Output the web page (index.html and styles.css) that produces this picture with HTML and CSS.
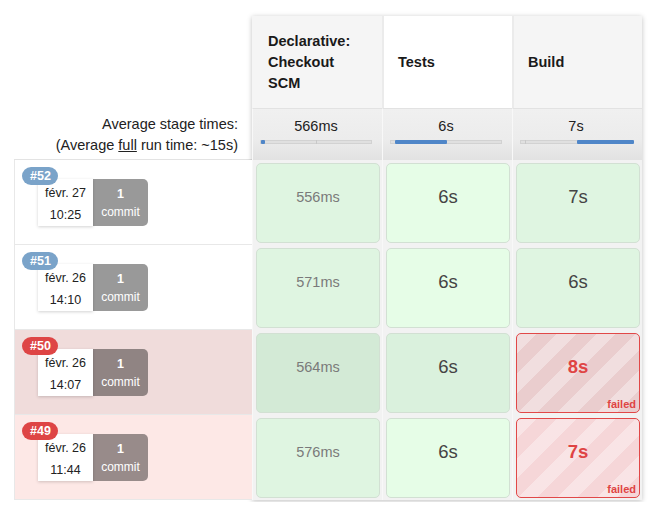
FILE: index.html
```html
<!DOCTYPE html>
<html>
<head>
<meta charset="utf-8">
<link rel="stylesheet" href="styles.css">
</head>
<body>
<div class="stage-view">
  <div class="runs">
    <div class="runs-head"></div>
    <div class="avg-label">
      <div>Average stage times:</div>
      <div>(Average <u>full</u> run time: ~15s)</div>
    </div>
    <div class="run">
      <span class="badge blue">#52</span>
      <div class="run-box">
        <div class="date"><span>févr. 27</span><span>10:25</span></div>
        <div class="commits"><b>1</b><span>commit</span></div>
      </div>
    </div>
    <div class="run">
      <span class="badge blue">#51</span>
      <div class="run-box">
        <div class="date"><span>févr. 26</span><span>14:10</span></div>
        <div class="commits"><b>1</b><span>commit</span></div>
      </div>
    </div>
    <div class="run run-failed run-hover">
      <span class="badge red">#50</span>
      <div class="run-box">
        <div class="date"><span>févr. 26</span><span>14:07</span></div>
        <div class="commits"><b>1</b><span>commit</span></div>
      </div>
    </div>
    <div class="run run-failed">
      <span class="badge red">#49</span>
      <div class="run-box">
        <div class="date"><span>févr. 26</span><span>11:44</span></div>
        <div class="commits"><b>1</b><span>commit</span></div>
      </div>
    </div>
  </div>

  <div class="stages">
    <div class="head head-wrap">Declarative: Checkout SCM</div>
    <div class="head head-hl">Tests</div>
    <div class="head">Build</div>

    <div class="avg"><div class="avg-time">566ms</div><div class="bar"><div class="fill" style="left:0;width:4px"></div><div class="tick" style="left:55px"></div></div></div>
    <div class="avg"><div class="avg-time">6s</div><div class="bar"><div class="fill" style="left:4px;width:52px"></div></div></div>
    <div class="avg"><div class="avg-time">7s</div><div class="bar"><div class="fill" style="left:56px;width:57px"></div><div class="tick" style="left:4px"></div></div></div>

    <div class="cell"><div class="box ok"><span class="ms">556ms</span></div></div>
    <div class="cell"><div class="box ok hl"><span class="sec">6s</span></div></div>
    <div class="cell"><div class="box ok"><span class="sec">7s</span></div></div>

    <div class="cell"><div class="box ok"><span class="ms">571ms</span></div></div>
    <div class="cell"><div class="box ok hl"><span class="sec">6s</span></div></div>
    <div class="cell"><div class="box ok"><span class="sec">6s</span></div></div>

    <div class="cell"><div class="box ok dark"><span class="ms">564ms</span></div></div>
    <div class="cell"><div class="box ok dark-hl"><span class="sec">6s</span></div></div>
    <div class="cell"><div class="box failed dark-failed"><span class="sec">8s</span><span class="failed-label">failed</span></div></div>

    <div class="cell"><div class="box ok"><span class="ms">576ms</span></div></div>
    <div class="cell"><div class="box ok hl"><span class="sec">6s</span></div></div>
    <div class="cell"><div class="box failed"><span class="sec">7s</span><span class="failed-label">failed</span></div></div>
  </div>
</div>
</body>
</html>
```

FILE: styles.css
```css
html, body {
  margin: 0;
  padding: 0;
  background: #fff;
}
body {
  font-family: "Liberation Sans", Arial, sans-serif;
  color: #333;
  font-size: 14px;
}
.stage-view {
  display: flex;
  padding: 16px 0 0 14px;
}
.runs {
  width: 238px;
  display: flex;
  flex-direction: column;
}
.runs-head {
  height: 92px;
}
.avg-label {
  height: 52px;
  box-sizing: border-box;
  padding: 6px 14px 0 0;
  text-align: right;
  line-height: 21px;
  font-size: 14.5px;
  color: #222;
  border-bottom: 1px solid #e3e3e3;
}
.run {
  position: relative;
  height: 85px;
  box-sizing: border-box;
  border: 1px solid #e8e8e8;
  border-right: none;
  border-top: none;
  background: #fff;
}
.run-failed { background: #fde8e6; }
.run-hover { background: #f0dcdb; }
.badge {
  position: absolute;
  left: 7px;
  top: 7px;
  z-index: 2;
  height: 18px;
  line-height: 18px;
  padding: 0 7px 0 8px;
  border-radius: 9px;
  color: #fff;
  font-weight: bold;
  font-size: 12.5px;
}
.badge.blue { background: #7aa3c9; }
.badge.red { background: #de4545; }
.run-box {
  display: flex;
  margin: 19px 0 0 23px;
  height: 47px;
}
.date {
  width: 55px;
  background: #fff;
  box-shadow: 0 1px 3px rgba(0,0,0,0.18);
  display: flex;
  flex-direction: column;
  align-items: center;
  justify-content: center;
  font-size: 12.5px;
  line-height: 22px;
  padding-top: 2px;
  box-sizing: border-box;
  color: #222;
}
.commits {
  width: 55px;
  background: rgba(0,0,0,0.4);
  border-radius: 0 5px 5px 0;
  display: flex;
  flex-direction: column;
  align-items: center;
  justify-content: center;
  color: #fff;
  font-size: 12px;
  line-height: 18px;
}
.commits b { font-size: 12.5px; }

.stages {
  display: grid;
  grid-template-columns: repeat(3, 130px);
  grid-template-rows: 92px 52px repeat(4, 85px);
  box-shadow: 0 1px 5px rgba(0,0,0,0.25);
  background: #f2f2f2;
  margin-bottom: 2px;
}
.head {
  background: #f5f5f5;
  font-weight: bold;
  font-size: 14.5px;
  line-height: 21px;
  padding: 0 14px 0 14px;
  display: flex;
  align-items: center;
  color: #1a1a1a;
  border-left: 2px solid #ebebeb;
}
.head:first-child { border-left: none; padding-left: 16px; }
.head-wrap { padding-right: 28px; }
.head-hl { background: #fff; }
.avg {
  background: linear-gradient(#f0f0f0, #ececec 60%, #e2e2e2);
  border-left: 1px solid #f8f8f8;
  border-top: 1px solid #e2e2e2;
  padding: 0 10px 0 7px;
}
.avg-time {
  text-align: center;
  padding-top: 9px;
  line-height: 17px;
  font-size: 14.5px;
  color: #222;
}
.bar {
  position: relative;
  margin-top: 5px;
  height: 4px;
  background: #e0e0e0;
  border: 1px solid #d2d2d2;
  box-sizing: border-box;
}
.fill {
  position: absolute;
  top: -1px;
  height: 4px;
  background: #4f86c8;
  border-radius: 1px;
}
.tick {
  position: absolute;
  top: -1px;
  width: 1px;
  height: 4px;
  background: #c8c8c8;
}
.cell {
  padding: 3px 2px 2px 3px;
  border-left: 1px solid #f8f8f8;
}
.box {
  position: relative;
  height: 100%;
  box-sizing: border-box;
  border-radius: 5px;
  display: flex;
  align-items: center;
  justify-content: center;
}
.ok {
  background: #dff5e1;
  border: 1px solid #d2e0d3;
}
.ok.hl { background: #e6fde7; }
.ok.dark { background: #d3ead6; }
.ok.dark-hl { background: #daf1dd; }
.ms {
  color: #7a7a7a;
  font-size: 14.5px;
  margin-top: -12px;
}
.sec {
  color: #444;
  font-size: 18.5px;
  margin-top: -12px;
}
.failed {
  border: 1.5px solid #e14848;
  background-color: #f6d6d8;
  background-image: repeating-linear-gradient(135deg, rgba(255,255,255,0.35) 0 14px, rgba(255,255,255,0) 14px 28px);
}
.failed.dark-failed { background-color: #eacdce; }
.failed .sec {
  color: #df4444;
  font-weight: bold;
}
.failed-label {
  position: absolute;
  right: 3px;
  bottom: 2px;
  font-size: 11px;
  font-weight: bold;
  color: #df4444;
}
```
